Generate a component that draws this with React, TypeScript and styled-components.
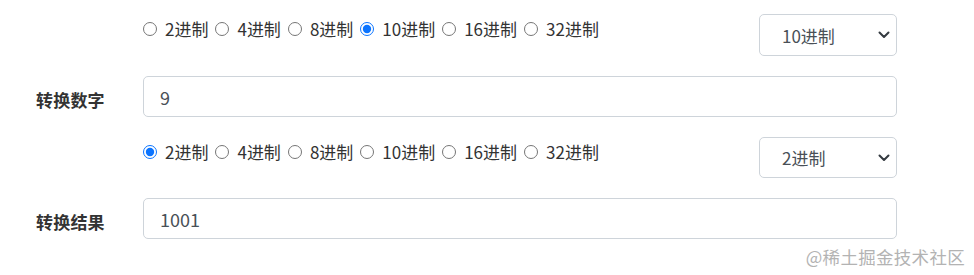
import React, { useState } from 'react'
import styled, { createGlobalStyle } from 'styled-components'

const GlobalStyle = createGlobalStyle`
  html, body {
    margin: 0;
    padding: 0;
    background: #fff;
  }
  body {
    font-family: "Microsoft YaHei", "Noto Sans CJK SC", "Noto Sans", sans-serif;
    color: #333;
  }
`

const Page = styled.div`
  position: relative;
  width: 974px;
  height: 275px;
  padding-top: 14px;
  box-sizing: border-box;
`

const Form = styled.form`
  display: flex;
  flex-direction: column;
  gap: 20px;
  margin: 0;
`

const Row = styled.div`
  display: grid;
  grid-template-columns: 143px 754px;
  align-items: center;
`

const Label = styled.label`
  padding-left: 36px;
  padding-top: 6px;
  font-size: 17px;
  font-weight: 700;
  color: #333;
  letter-spacing: 0.2px;
`

const BaseLine = styled.div`
  display: flex;
  justify-content: space-between;
  align-items: flex-start;
`

const RadioGroup = styled.div`
  display: flex;
  gap: 7px;
  padding-top: 2px;
  line-height: 26px;
`

const RadioItem = styled.label`
  display: inline-flex;
  align-items: center;
  font-size: 17px;
  color: #333;
  cursor: pointer;

  input {
    width: 14px;
    height: 14px;
    margin: 0 8px 0 0;
    accent-color: #0b74ff;
  }
`

const SelectWrap = styled.div`
  position: relative;
  width: 138px;
  height: ${(p: { h: number }) => p.h}px;
`

const Select = styled.select`
  appearance: none;
  width: 100%;
  height: 100%;
  box-sizing: border-box;
  padding: 0 30px 0 22px;
  border: 1px solid #ced4da;
  border-radius: 5px;
  background: #fff;
  font-family: inherit;
  font-size: 17px;
  color: #495057;
  outline: none;
`

const Chevron = styled.svg`
  position: absolute;
  right: 7px;
  top: 50%;
  margin-top: -4px;
  pointer-events: none;
`

const TextInput = styled.input`
  width: 100%;
  height: 41px;
  box-sizing: border-box;
  padding: 0 16px;
  border: 1px solid #ced4da;
  border-radius: 5px;
  font-family: inherit;
  font-size: 18px;
  color: #495057;
  outline: none;
`

const Watermark = styled.div`
  position: absolute;
  right: 9px;
  bottom: 6px;
  font-size: 17.5px;
  color: #b3b3b3;
  letter-spacing: 0.3px;
`

const bases = [2, 4, 8, 10, 16, 32]

function BaseRow({ name, value, onChange, h }: { name: string; value: number; onChange: (v: number) => void; h: number }) {
  return (
    <Row>
      <span />
      <BaseLine>
        <RadioGroup>
          {bases.map((b) => (
            <RadioItem key={b}>
              <input type="radio" name={name} checked={value === b} onChange={() => onChange(b)} />
              {b}进制
            </RadioItem>
          ))}
        </RadioGroup>
        <SelectWrap h={h}>
          <Select value={value} onChange={(e) => onChange(Number(e.target.value))}>
            {bases.map((b) => (
              <option key={b} value={b}>{b}进制</option>
            ))}
          </Select>
          <Chevron width="12" height="8" viewBox="0 0 12 8">
            <path d="M1.5 1.5 L6 6 L10.5 1.5" fill="none" stroke="#343a40" strokeWidth="2" strokeLinecap="round" strokeLinejoin="round" />
          </Chevron>
        </SelectWrap>
      </BaseLine>
    </Row>
  )
}

export default function App() {
  const [from, setFrom] = useState(10)
  const [to, setTo] = useState(2)
  const [num, setNum] = useState('9')

  const parsed = parseInt(num, from)
  const result = isNaN(parsed) ? '' : parsed.toString(to)

  return (
    <Page>
      <GlobalStyle />
      <Form onSubmit={(e) => e.preventDefault()}>
        <BaseRow name="from" value={from} onChange={setFrom} h={42} />
        <Row>
          <Label>转换数字</Label>
          <TextInput value={num} onChange={(e) => setNum(e.target.value)} />
        </Row>
        <BaseRow name="to" value={to} onChange={setTo} h={41} />
        <Row>
          <Label>转换结果</Label>
          <TextInput value={result} readOnly />
        </Row>
      </Form>
      <Watermark>@稀土掘金技术社区</Watermark>
    </Page>
  )
}
